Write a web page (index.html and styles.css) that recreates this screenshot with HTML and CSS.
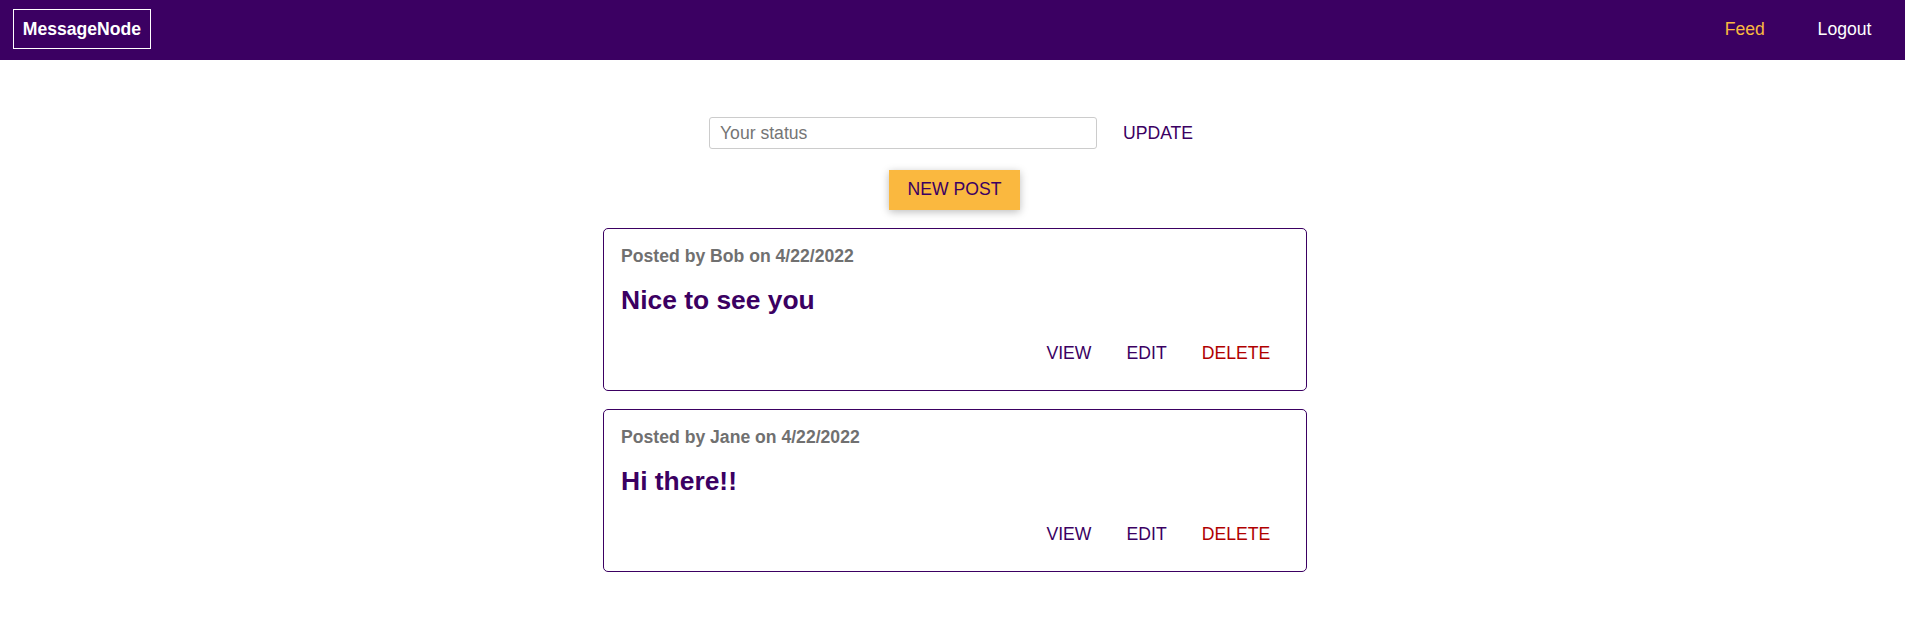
FILE: index.html
```html
<!DOCTYPE html>
<html lang="en">
<head>
<meta charset="utf-8">
<title>MessageNode</title>
<link rel="stylesheet" href="styles.css">
</head>
<body>
<header class="main-header">
  <div class="logo">MessageNode</div>
  <nav>
    <ul class="nav-items">
      <li><a class="nav-link active" href="#">Feed</a></li>
      <li><a class="nav-link" href="#">Logout</a></li>
    </ul>
  </nav>
</header>
<main class="feed">
  <section class="status">
    <form class="status-form">
      <input class="status-input" type="text" placeholder="Your status">
      <button class="flat-btn status-btn" type="button">Update</button>
    </form>
  </section>
  <section class="control">
    <button class="raised-btn" type="button">New Post</button>
  </section>
  <section class="posts">
    <article class="post">
      <p class="post-meta">Posted by Bob on 4/22/2022</p>
      <h1 class="post-title">Nice to see you</h1>
      <div class="post-actions">
        <button class="flat-btn" type="button">View</button>
        <button class="flat-btn" type="button">Edit</button>
        <button class="flat-btn danger" type="button">Delete</button>
      </div>
    </article>
    <article class="post">
      <p class="post-meta">Posted by Jane on 4/22/2022</p>
      <h1 class="post-title">Hi there!!</h1>
      <div class="post-actions">
        <button class="flat-btn" type="button">View</button>
        <button class="flat-btn" type="button">Edit</button>
        <button class="flat-btn danger" type="button">Delete</button>
      </div>
    </article>
  </section>
</main>
</body>
</html>
```
FILE: styles.css
```css
* {
  box-sizing: border-box;
}

html, body {
  margin: 0;
  padding: 0;
  background: #ffffff;
  font-family: "Liberation Sans", Arial, sans-serif;
  font-size: 17.6px;
}

.main-header {
  display: flex;
  justify-content: space-between;
  align-items: center;
  height: 60px;
  padding: 0 16px 2px 13px;
  background: #3b0062;
}

.logo {
  color: #ffffff;
  font-weight: bold;
  font-size: 17.6px;
  border: 1px solid #ffffff;
  padding: 8.8px;
}

.nav-items {
  display: flex;
  gap: 17.6px;
  list-style: none;
  margin: 0;
  padding: 0;
}

.nav-link {
  display: block;
  padding: 0 17.6px;
  color: #ffffff;
  text-decoration: none;
  font-size: 17.6px;
}

.nav-link.active {
  color: #fab83f;
}

.feed {
  width: 708px;
  margin: 0 auto;
  padding: 57px 0 0 4px;
}

.status-form {
  display: flex;
  align-items: center;
  margin: 0 0 0 106.5px;
}

.status-input {
  width: 388px;
  height: 32px;
  border: 1px solid #cccccc;
  border-radius: 3px;
  padding: 0 10px;
  font-family: inherit;
  font-size: 17.6px;
  color: #333333;
  outline: none;
}

.status-input::placeholder {
  color: #757575;
}

.flat-btn {
  background: transparent;
  border: none;
  color: #3b0062;
  font-family: inherit;
  font-size: 17.6px;
  text-transform: uppercase;
  padding: 9px 17.6px;
  cursor: pointer;
}

.flat-btn.danger {
  color: #b00000;
}

.status-btn {
  margin-left: 8.4px;
  padding: 0 17.6px;
}

.control {
  display: flex;
  justify-content: center;
  margin-top: 21px;
}

.raised-btn {
  background: #fab83f;
  border: 1px solid #fab83f;
  color: #3b0062;
  font-family: inherit;
  font-size: 17.6px;
  text-transform: uppercase;
  padding: 8.4px 17.6px;
  box-shadow: 0 2px 8px rgba(0, 0, 0, 0.26);
  cursor: pointer;
}

.posts {
  margin-top: 18px;
}

.post {
  border: 1px solid #3b0062;
  border-radius: 5px;
  padding: 17.6px;
  margin-bottom: 17.6px;
}

.post-meta {
  margin: 0;
  font-size: 17.6px;
  font-weight: bold;
  color: #707070;
}

.post-title {
  margin: 17.6px 0;
  font-size: 26.4px;
  font-weight: bold;
  color: #3b0062;
}

.post-actions {
  display: flex;
  justify-content: flex-end;
}
```
